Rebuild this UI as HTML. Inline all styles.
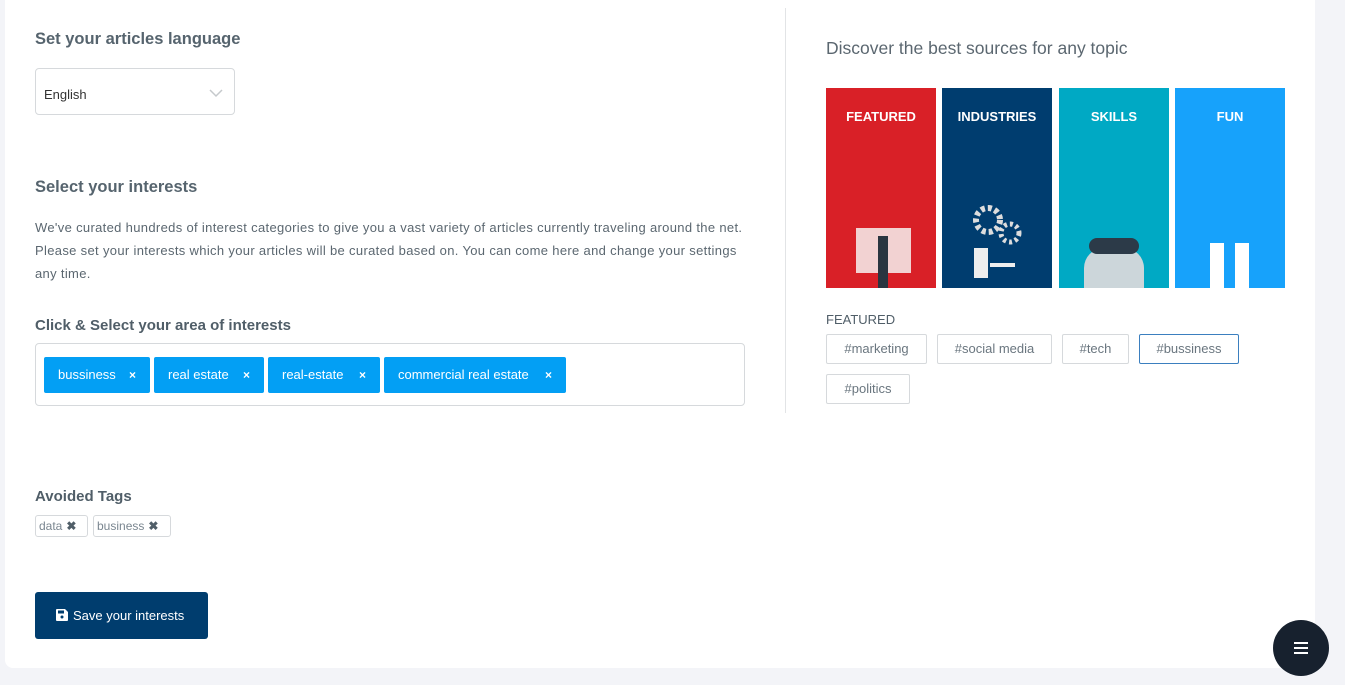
<!DOCTYPE html>
<html><head><meta charset="utf-8"><style>
*{box-sizing:border-box;margin:0;padding:0}
body{width:1345px;height:685px;background:#f3f4f8;font-family:"Liberation Sans",sans-serif;position:relative;overflow:hidden;color:#4c5b66}
.card{position:absolute;left:5px;top:0;width:1310px;height:668px;background:#fff;border-radius:0 0 8px 8px}
.abs{position:absolute}
h2{font-size:16.5px;font-weight:bold;color:#56646e;position:absolute}
.sel{left:35px;top:68px;width:200px;height:47px;border:1px solid #d6d9dc;border-radius:4px;font-size:13px;color:#333;padding:18px 0 0 8px}
.p{left:35px;top:216px;width:740px;font-size:13px;line-height:23px;color:#5b6770;letter-spacing:0.33px;white-space:nowrap}
.lbl{font-size:15px;font-weight:bold;color:#505e68}
.box{left:35px;top:343px;width:710px;height:63px;border:1px solid #d6d9dc;border-radius:4px}
.tag{position:absolute;top:13px;height:36px;background:#039ff4;color:#fff;font-size:13px;line-height:36px;border-radius:2px;padding-left:14px}
.tag b{position:absolute;right:14px;font-weight:bold;font-size:12px}
.at{position:absolute;top:515px;height:22px;border:1px solid #d6d9dc;border-radius:3px;font-size:12px;line-height:20px;color:#7a8690;padding-left:3px}
.at b{color:#505e68;margin-left:4px}
.btn{left:35px;top:592px;width:173px;height:47px;background:#003d6e;border-radius:3px;color:#fff;font-size:13px;line-height:47px;padding-left:38px}
.vl{left:785px;top:8px;width:1px;height:405px;background:#e2e4e6}
.col{position:absolute;top:88px;width:110px;height:200px;color:#fff;font-size:13px;font-weight:bold;text-align:center;padding-top:21px}
.ht{position:absolute;height:30px;border:1px solid #d6d9dc;border-radius:2px;font-size:13px;line-height:28px;color:#6a767f;text-align:center}
.fab{left:1273px;top:620px;width:56px;height:56px;border-radius:50%;background:#17212e}
</style></head><body>
<div class="card"></div>
<h2 style="left:35px;top:30px">Set your articles language</h2>
<div class="abs sel">English<svg class="abs" style="left:173px;top:20px" width="14" height="9"><path d="M1 1l6 6 6-6" fill="none" stroke="#c5c9cc" stroke-width="1.5"/></svg></div>
<h2 style="left:35px;top:178px">Select your interests</h2>
<div class="abs p">We've curated hundreds of interest categories to give you a vast variety of articles currently traveling around the net.<br>Please set your interests which your articles will be curated based on. You can come here and change your settings<br>any time.</div>
<div class="abs lbl" style="left:35px;top:317px">Click &amp; Select your area of interests</div>
<div class="abs box">
<div class="tag" style="left:8px;width:106px">bussiness<b>×</b></div>
<div class="tag" style="left:118px;width:110px">real estate<b>×</b></div>
<div class="tag" style="left:232px;width:112px">real-estate<b>×</b></div>
<div class="tag" style="left:348px;width:182px">commercial real estate<b>×</b></div>
</div>
<div class="abs lbl" style="left:35px;top:488px">Avoided Tags</div>
<div class="at" style="left:35px;width:53px">data<b>✖</b></div>
<div class="at" style="left:93px;width:78px">business<b>✖</b></div>
<div class="abs btn"><svg class="abs" style="left:21px;top:17px" width="12" height="12"><path d="M0 1a1 1 0 011-1h8l3 3v8a1 1 0 01-1 1H1a1 1 0 01-1-1z" fill="#fff"/><rect x="2" y="1.5" width="6" height="3" fill="#003d6e"/><circle cx="6" cy="8" r="1.5" fill="#003d6e"/></svg>Save your interests</div>
<div class="abs vl"></div>
<h2 style="left:826px;top:38px;font-size:17.5px;font-weight:normal;color:#5b6770">Discover the best sources for any topic</h2>
<div class="col" style="left:826px;background:#d92027">FEATURED
<div class="abs" style="left:30px;top:140px;width:55px;height:45px;background:#f4e6e6;opacity:.9"></div><div class="abs" style="left:52px;top:148px;width:10px;height:52px;background:#2a3540"></div></div>
<div class="col" style="left:942px;background:#003d6f">INDUSTRIES
<svg class="abs" style="left:20px;top:110px" width="80" height="90"><circle cx="26" cy="22" r="12" fill="none" stroke="#ddd" stroke-width="6" stroke-dasharray="4 3"/><circle cx="48" cy="35" r="9" fill="none" stroke="#ddd" stroke-width="5" stroke-dasharray="3 3"/><rect x="12" y="50" width="14" height="30" fill="#eee"/><rect x="28" y="65" width="25" height="4" fill="#eee"/></svg></div>
<div class="col" style="left:1059px;background:#00a9c4">SKILLS
<div class="abs" style="left:25px;top:160px;width:60px;height:40px;background:#ccd6da;border-radius:20px 20px 0 0"></div><div class="abs" style="left:30px;top:150px;width:50px;height:16px;background:#2c3a48;border-radius:8px"></div></div>
<div class="col" style="left:1175px;background:#17a2fb">FUN
<div class="abs" style="left:35px;top:155px;width:14px;height:45px;background:#fff"></div><div class="abs" style="left:60px;top:155px;width:14px;height:45px;background:#fff"></div></div>
<div class="abs" style="left:826px;top:312px;font-size:13px;color:#505e68">FEATURED</div>
<div class="ht" style="left:826px;top:334px;width:101px">#marketing</div>
<div class="ht" style="left:937px;top:334px;width:115px">#social media</div>
<div class="ht" style="left:1062px;top:334px;width:67px">#tech</div>
<div class="ht" style="left:1139px;top:334px;width:100px;border-color:#3b7fbf">#bussiness</div>
<div class="ht" style="left:826px;top:374px;width:84px">#politics</div>
<div class="abs fab"><svg class="abs" style="left:21px;top:21px" width="14" height="14"><rect y="1" width="14" height="2" fill="#fff"/><rect y="6" width="14" height="2" fill="#fff"/><rect y="11" width="14" height="2" fill="#fff"/></svg></div>
</body></html>
